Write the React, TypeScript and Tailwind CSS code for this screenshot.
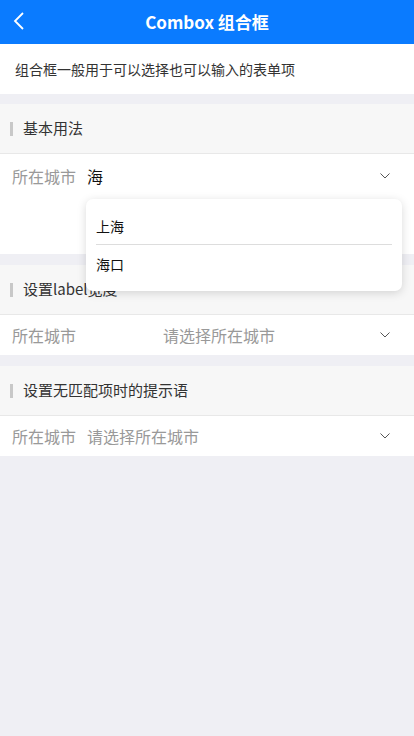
const Chevron = () => (
  <svg width="12" height="8" viewBox="0 0 12 8" fill="none" className="shrink-0">
    <path d="M1.5 1.5 L6 6 L10.5 1.5" stroke="#555" strokeWidth="1" />
  </svg>
);

const SectionTitle = ({ title }: { title: string }) => (
  <div className="h-[50px] bg-[#f7f7f7] border-b border-[#e8e8e8] flex items-center px-[10px]">
    <span className="w-[3px] h-[14px] bg-[#c8c8c8] mr-[10px]" />
    <span className="text-[15px] text-[#333]">{title}</span>
  </div>
);

const Row = ({
  value,
  placeholder,
  valueLeft,
  h,
}: {
  value?: string;
  placeholder?: string;
  valueLeft: string;
  h: string;
}) => (
  <div className={`${h} bg-white flex items-center pl-[12px] pr-[23px]`}>
    <span className={`text-[16px] text-[#999] shrink-0 ${valueLeft}`}>所在城市</span>
    <span className={`flex-1 text-[16px] ${value ? 'text-[#111]' : 'text-[#999]'}`}>
      {value || placeholder}
    </span>
    <Chevron />
  </div>
);

export default function App() {
  return (
    <div
      className="min-h-[736px] bg-[#efeff4]"
      style={{ fontFamily: '"Noto Sans CJK SC", "Noto Sans", sans-serif' }}
    >
      <div className="h-[44px] bg-[#0a7bff] flex items-center relative">
        <svg width="12" height="18" viewBox="0 0 12 18" fill="none" className="absolute left-[13px] top-[12px]">
          <path d="M10 1 L2 9 L10 17" stroke="white" strokeWidth="1.8" />
        </svg>
        <div className="flex-1 text-center text-white font-bold text-[17px]">Combox 组合框</div>
      </div>

      <div className="h-[50px] bg-white flex items-center px-[15px] text-[14px] text-[#333]">
        组合框一般用于可以选择也可以输入的表单项
      </div>

      <div className="mt-[10px]">
        <SectionTitle title="基本用法" />
        <div className="relative bg-white h-[100px]">
          <Row value="海" valueLeft="w-[75px]" h="h-[44px]" />
          <div className="absolute left-[86px] top-[45px] w-[316px] h-[92px] bg-white rounded-[7px] shadow-[0_2px_10px_rgba(0,0,0,0.15)] z-10 px-[10px] pt-[10px]">
            <div className="h-[36px] flex items-center border-b border-[#ddd] text-[14px] text-[#111]">上海</div>
            <div className="h-[38px] flex items-center text-[14px] text-[#111]">海口</div>
          </div>
        </div>
      </div>

      <div className="mt-[11px]">
        <SectionTitle title="设置label宽度" />
        <Row placeholder="请选择所在城市" valueLeft="w-[151px]" h="h-[40px]" />
      </div>

      <div className="mt-[11px]">
        <SectionTitle title="设置无匹配项时的提示语" />
        <Row placeholder="请选择所在城市" valueLeft="w-[75px]" h="h-[40px]" />
      </div>
    </div>
  );
}
